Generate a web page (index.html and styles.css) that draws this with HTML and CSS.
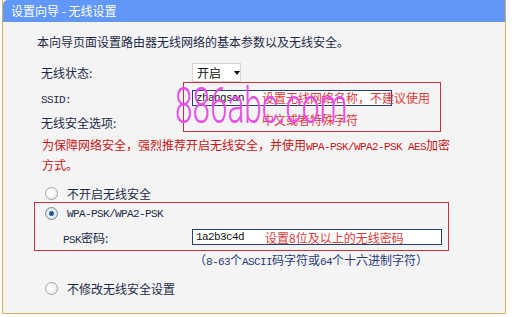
FILE: index.html
```html
<!DOCTYPE html>
<html>
	<head>
		<meta charset="utf-8" />
		<title>设置向导 - 无线设置</title>
		<link rel="stylesheet" href="styles.css">
	</head>
	<body>
		<div class="panel">
			<div class="hd">设置向导 - 无线设置</div>
			<div class="bd">
				<p class="intro">本向导页面设置路由器无线网络的基本参数以及无线安全。</p>
				<div class="form">
					<div class="row">
						<span class="label">无线状态:</span>
						<span class="select">开启<i class="arrow"></i></span>
					</div>
					<div class="row">
						<span class="label"><span class="en">SSID:</span></span>
						<span class="input ssid"><span class="en">zhangsan</span></span>
					</div>
					<div class="row">
						<span class="label">无线安全选项:</span>
					</div>
				</div>
				<p class="warn">为保障网络安全，强烈推荐开启无线安全，并使用<span class="en">WPA-PSK/WPA2-PSK AES</span>加密<br>方式。</p>
				<div class="opt first"><i class="radio"></i>不开启无线安全</div>
				<div class="wpa">
					<div class="opt"><i class="radio on"></i><span class="en">WPA-PSK/WPA2-PSK</span></div>
					<div class="row psk">
						<span class="label"><span class="en">PSK</span>密码:</span>
						<span class="input pwd"><span class="en">1a2b3c4d</span><span class="note">设置8位及以上的无线密码</span></span>
					</div>
				</div>
				<p class="hint">（<span class="en">8-63</span>个<span class="en">ASCII</span>码字符或<span class="en">64</span>个十六进制字符）</p>
				<div class="opt last"><i class="radio"></i>不修改无线安全设置</div>
			</div>
			<div class="callout">设置无线网络名称，不建议使用<br>中文或者特殊字符</div>
			<div class="watermark">886abc.com</div>
		</div>
	</body>
</html>
```

FILE: styles.css
```css
body {
	margin: 0;
	background: #fff;
	font-family: "Noto Sans CJK SC", "Liberation Sans", sans-serif;
	font-size: 12px;
	color: #1e2a48;
}

p {
	margin: 0;
}

.en {
	font-family: "Liberation Mono", monospace;
	font-size: 11px;
	letter-spacing: -0.6px;
}

.panel {
	position: relative;
	box-sizing: border-box;
	width: 504px;
	height: 314px;
	margin-left: 2px;
	background: #f4f4f4;
	border-left: 1px solid #dcae64;
	border-right: 1px solid #dcae64;
	border-bottom: 1px solid #dcae64;
}

.hd {
	height: 22px;
	line-height: 22px;
	padding-left: 8px;
	background: #6097f8;
	color: #fff;
	font-size: 12px;
	border-top-left-radius: 5px;
}

.bd {
	padding: 10px 0 0 34px;
}

.intro {
	line-height: 20px;
}

.form {
	margin-top: 8px;
}

.row {
	display: flex;
	align-items: center;
	height: 25px;
	padding-left: 4px;
}

.label {
	width: 151px;
	flex: none;
}

.select {
	display: flex;
	align-items: center;
	box-sizing: border-box;
	width: 49px;
	height: 19px;
	padding-left: 4px;
	background: #fff;
	border: 1px solid #d4d4d4;
	color: #111;
}

.arrow {
	margin-left: 13px;
	border-left: 3.5px solid transparent;
	border-right: 3.5px solid transparent;
	border-top: 4px solid #111;
}

.input {
	display: flex;
	align-items: center;
	box-sizing: border-box;
	height: 16px;
	padding-left: 3px;
	background: #fff;
	border: 1px solid #23407a;
	color: #111;
}

.ssid {
	width: 200px;
}

.pwd {
	width: 250px;
}

.note {
	margin-left: 21px;
	color: #e03a3a;
}

.warn {
	margin-top: 1px;
	padding-left: 5px;
	line-height: 17px;
	color: #c81414;
}

.opt {
	display: flex;
	align-items: center;
	height: 21px;
	padding-left: 8px;
	gap: 9px;
}

.opt.first {
	height: 22px;
	margin-top: 9px;
}

.opt.last {
	height: 24px;
	margin-top: 5px;
}

.radio {
	box-sizing: border-box;
	width: 13px;
	height: 13px;
	border-radius: 50%;
	border: 1px solid #a4a4a4;
	background: radial-gradient(circle at 40% 40%, #fff 30%, #dcdcdc 100%);
}

.radio.on {
	border-color: #7c8c9c;
	background: radial-gradient(circle, #1d4f78 0, #2f6f9c 28%, #e8eef4 38%, #d0d6dc 100%);
}

.wpa {
	width: 413px;
	margin: -2px 0 0 -3px;
	border: 1px solid #c8323c;
}

.wpa .opt {
	padding-left: 10px;
}

.psk {
	height: 26px;
	padding-left: 28px;
}

.psk .label {
	width: 129px;
}

.hint {
	margin-left: 157px;
	line-height: 18px;
	color: #2a3d7a;
}

.callout {
	position: absolute;
	left: 180px;
	top: 82px;
	box-sizing: border-box;
	width: 258px;
	height: 50px;
	padding: 4px 0 0 78px;
	line-height: 22px;
	border: 1px solid #c8323c;
	color: #e03a3a;
}

.watermark {
	position: absolute;
	left: 172px;
	top: 81px;
	font-family: Roboto, "Liberation Sans", sans-serif;
	font-weight: 300;
	font-size: 50px;
	line-height: 50px;
	color: #e64ee6;
	transform: scaleX(0.63);
	transform-origin: left top;
	white-space: nowrap;
}
```
